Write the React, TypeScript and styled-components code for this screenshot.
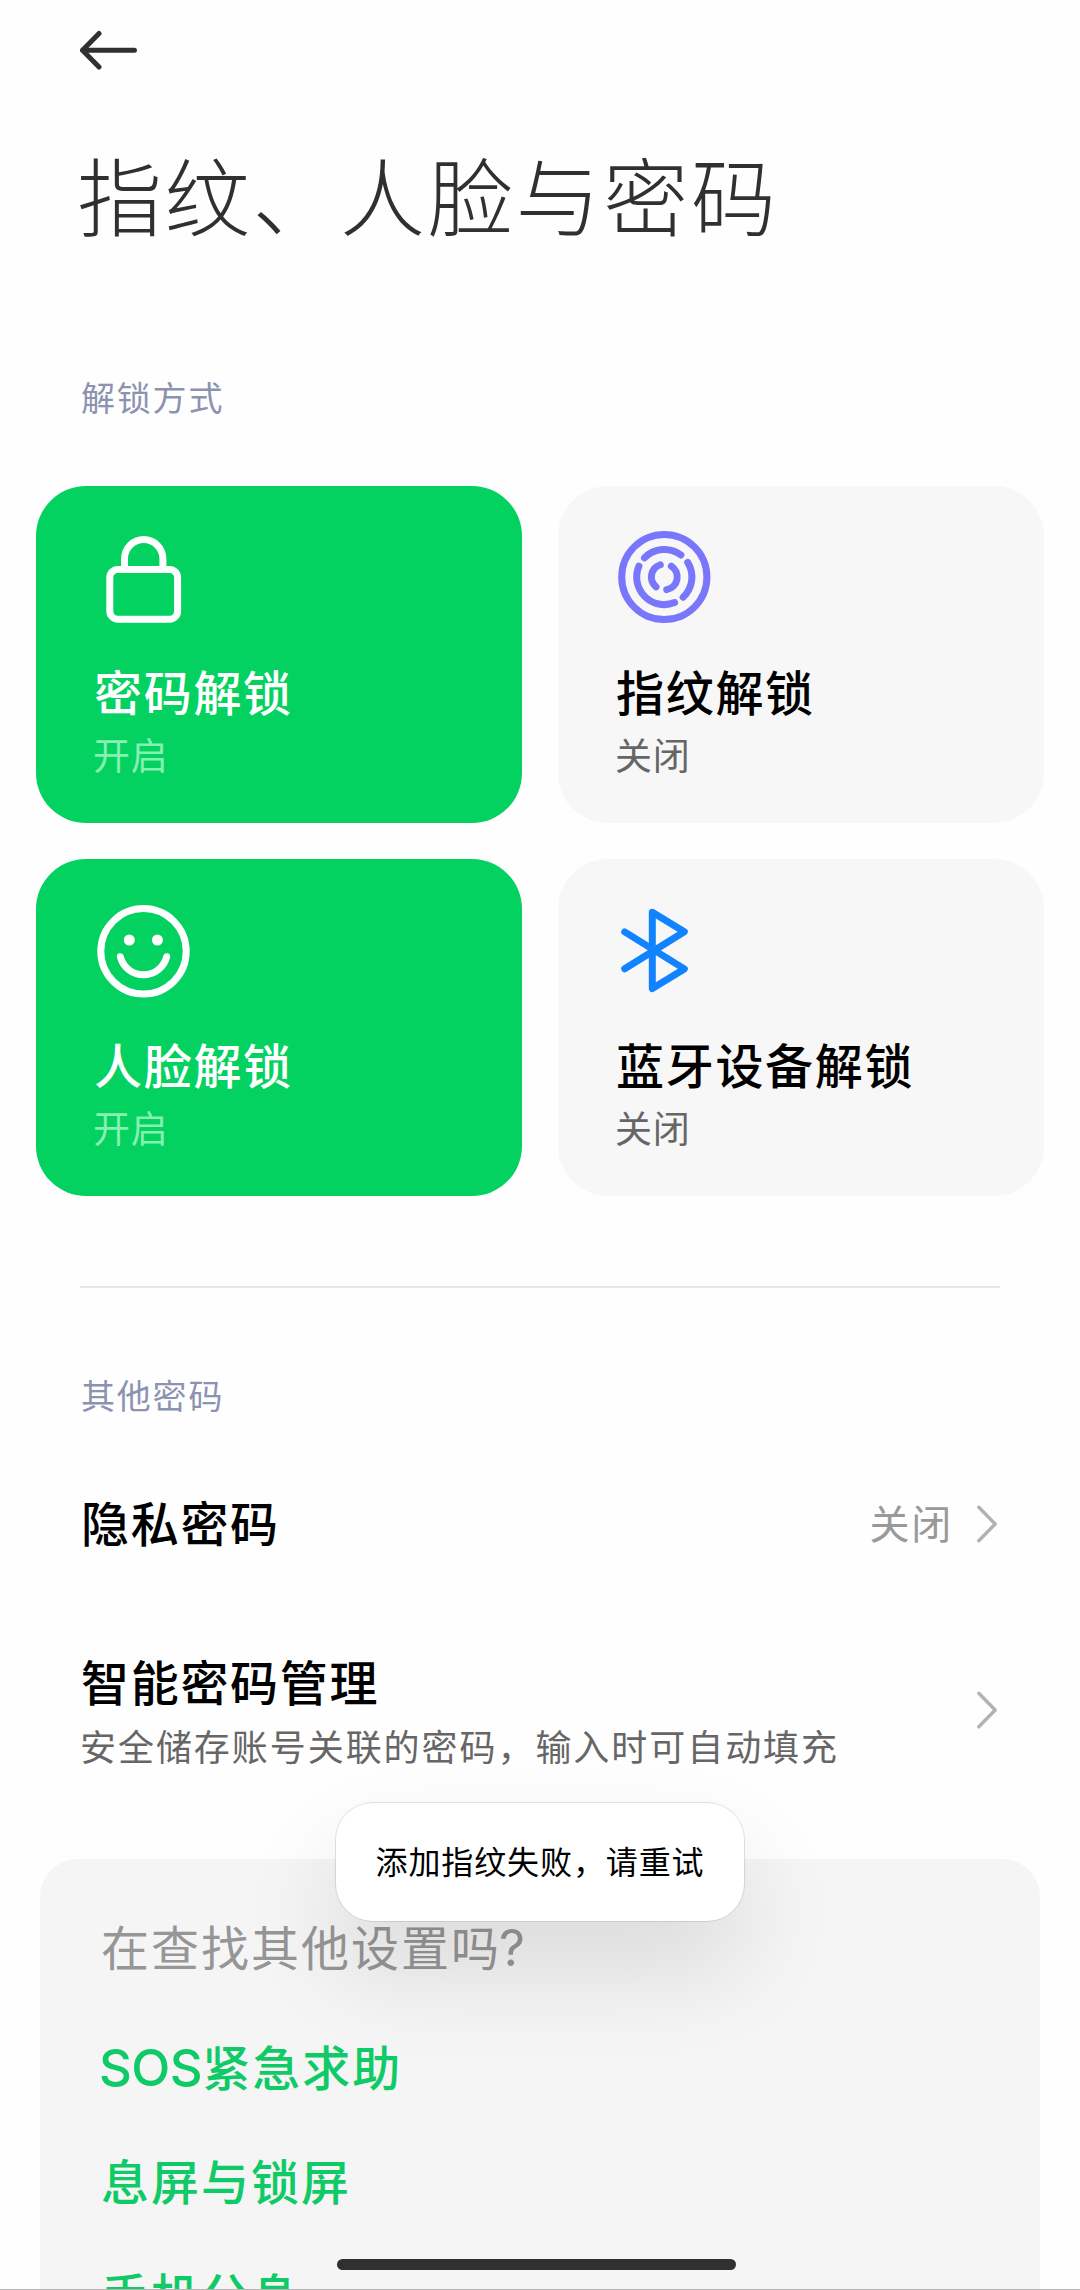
import React from "react";
import styled, { createGlobalStyle } from "styled-components";

const GlobalStyle = createGlobalStyle`
  *, *::before, *::after { box-sizing: border-box; }
  html, body { margin: 0; padding: 0; background: #fefefe; }
  body {
    font-family: "Noto Sans CJK SC", "Noto Sans", sans-serif;
    -webkit-font-smoothing: antialiased;
  }
`;

const Screen = styled.div`
  position: relative;
  width: 1080px;
  height: 2290px;
  overflow: hidden;
  display: flex;
  flex-direction: column;
  background: #fefefe;
  border-bottom: 1px solid #b4b4b4;
`;

const Header = styled.header`
  flex: none;
  display: flex;
  flex-direction: column;
  align-items: flex-start;
  padding: 30px 78px 0;
`;

const BackButton = styled.button`
  display: block;
  padding: 0;
  border: 0;
  background: none;
  line-height: 0;
`;

const PageTitle = styled.h1`
  margin: 73px 0 0 -1px;
  font-size: 85px;
  font-weight: 300;
  line-height: 100px;
  letter-spacing: 2.7px;
  color: #303030;
  white-space: nowrap;
`;

const SectionLabel = styled.h2<{ $top: number }>`
  flex: none;
  margin: ${(p) => p.$top}px 0 0 81px;
  font-size: 34px;
  font-weight: 400;
  line-height: 48px;
  letter-spacing: 1.8px;
  color: #8c93b0;
`;

const CardGrid = styled.section`
  flex: none;
  display: grid;
  grid-template-columns: 486px 486px;
  grid-auto-rows: 337px;
  gap: 36px;
  margin: 65px 36px 0;
`;

const Card = styled.article<{ $active: boolean }>`
  display: flex;
  flex-direction: column;
  align-items: flex-start;
  padding: 40px 58px 0;
  border-radius: 50px;
  background: ${(p) => (p.$active ? "#03d160" : "#f7f7f7")};
  color: ${(p) => (p.$active ? "#ffffff" : "#000000")};
`;

const CardIcon = styled.svg`
  flex: none;
  display: block;
  width: 100px;
  height: 100px;
  fill: none;
  stroke-width: 7px;
  stroke-linecap: round;
  stroke-linejoin: round;
`;

const CardTitle = styled.div`
  margin-top: 34px;
  font-size: 48px;
  font-weight: 500;
  line-height: 60px;
  letter-spacing: 1.7px;
  white-space: nowrap;
`;

const CardStatus = styled.div<{ $active: boolean }>`
  margin: 10px 0 0 -1px;
  font-size: 37px;
  line-height: 48px;
  letter-spacing: 0.7px;
  color: ${(p) => (p.$active ? "#85f0b2" : "#666666")};
`;

const Divider = styled.hr`
  flex: none;
  width: 920px;
  height: 2px;
  margin: 90px 0 0 80px;
  border: 0;
  background: #e6e6e6;
`;

const List = styled.section`
  flex: none;
  margin-top: 39px;
`;

const Row = styled.div<{ $height: number }>`
  display: flex;
  align-items: center;
  height: ${(p) => p.$height}px;
  padding: 0 82px 0 80px;
`;

const RowText = styled.div<{ $lift?: number }>`
  flex: 1;
  min-width: 0;
  padding-bottom: ${(p) => p.$lift ?? 0}px;
`;

const RowTitle = styled.div`
  padding-left: 1px;
  font-size: 48px;
  font-weight: 500;
  line-height: 60px;
  letter-spacing: 1.7px;
  color: #000;
`;

const RowNote = styled.div`
  margin-top: 10px;
  font-size: 36px;
  line-height: 50px;
  letter-spacing: 1.95px;
  color: #666;
  white-space: nowrap;
`;

const RowValue = styled.div`
  margin-right: 23px;
  padding-bottom: 5px;
  font-size: 40px;
  line-height: 56px;
  letter-spacing: 1.7px;
  color: #999;
`;

const Chevron = styled.svg`
  flex: none;
  display: block;
  width: 22px;
  height: 40px;
  fill: none;
  stroke: #b2b2b2;
  stroke-width: 3.4px;
  stroke-linecap: round;
  stroke-linejoin: round;
`;

const Suggestions = styled.section`
  flex: none;
  display: flex;
  flex-direction: column;
  gap: 54px;
  height: 500px;
  margin: 29px 40px 0;
  padding: 56px 61px 0;
  border-radius: 38px 38px 0 0;
  background: #f5f5f5;
`;

const Question = styled.div`
  margin-bottom: 6px;
  font-size: 48px;
  line-height: 60px;
  letter-spacing: 2px;
  color: #969696;
`;

const SuggestionLink = styled.a`
  flex: none;
  font-size: 48px;
  font-weight: 500;
  line-height: 60px;
  letter-spacing: 2px;
  color: #0fca66;
`;

const Latin = styled.span`
  margin-left: -2px;
  font-family: "Inter", sans-serif;
  font-size: 1.06em;
  line-height: 1;
  letter-spacing: -0.5px;
`;

const Toast = styled.div`
  position: absolute;
  left: 335px;
  top: 1802px;
  display: flex;
  align-items: center;
  justify-content: center;
  width: 410px;
  height: 120px;
  padding-bottom: 4px;
  border: 1px solid rgba(0, 0, 0, 0.1);
  border-radius: 38px;
  background: #fff;
  background-clip: padding-box;
  box-shadow: 0 48px 100px rgba(0, 0, 0, 0.11);
  font-size: 32px;
  line-height: 44px;
  letter-spacing: 0.9px;
  color: #000;
  white-space: nowrap;
`;

const HomeIndicator = styled.div`
  position: absolute;
  left: 337px;
  top: 2259px;
  width: 399px;
  height: 11px;
  border-radius: 6px;
  background: #303030;
`;

const LockIcon = () => (
  <CardIcon viewBox="0 0 100 100" stroke="#fff">
    <rect x="15.8" y="43.5" width="67.8" height="49.7" rx="8" />
    <path d="M30.5 43V32.8a19.2 19.2 0 0 1 38.4 0V43" strokeLinecap="butt" />
  </CardIcon>
);

const FingerprintIcon = () => {
  const arc = (r: number, from: number, to: number) => {
    const at = (deg: number) => {
      const a = (deg * Math.PI) / 180;
      return `${(48.3 + r * Math.cos(a)).toFixed(2)} ${(51 + r * Math.sin(a)).toFixed(2)}`;
    };
    return `M${at(from)}A${r} ${r} 0 0 1 ${at(to)}`;
  };
  return (
    <CardIcon viewBox="0 0 100 100" stroke="#7876fa">
      <circle cx="48.3" cy="51" r="42.6" />
      <path d={arc(27.6, -136, -53)} />
      <path d={arc(27.6, -32, 47)} />
      <path d={arc(27.6, 68, 203)} />
      <path d={arc(12.9, 130, 252)} />
      <path d={arc(12.9, -57, 79)} />
    </CardIcon>
  );
};

const FaceIcon = () => (
  <CardIcon viewBox="0 0 100 100" stroke="#fff">
    <circle cx="49.5" cy="52.3" r="42.7" />
    <circle cx="35.3" cy="41" r="5.5" fill="#fff" stroke="none" />
    <circle cx="63.4" cy="41" r="5.5" fill="#fff" stroke="none" />
    <path d="M26.3 57.7a23.9 23.9 0 0 0 46.4 0" />
  </CardIcon>
);

const BluetoothIcon = () => (
  <CardIcon viewBox="0 0 100 100" stroke="#1283ff">
    <path d="M8.7 32.9 68.3 69.9 36.3 89.6V13.2L68.3 32.7 8.7 69.7" />
  </CardIcon>
);

const methods = [
  { title: "密码解锁", active: true, Icon: LockIcon },
  { title: "指纹解锁", active: false, Icon: FingerprintIcon },
  { title: "人脸解锁", active: true, Icon: FaceIcon },
  { title: "蓝牙设备解锁", active: false, Icon: BluetoothIcon },
];

const ChevronRight = () => (
  <Chevron viewBox="0 0 22 40">
    <path d="M2.8 3.2 19.2 20 2.8 36.8" />
  </Chevron>
);

export default function App() {
  return (
    <>
      <GlobalStyle />
      <Screen lang="zh-CN">
        <Header>
          <BackButton aria-label="返回">
            <svg width="62" height="40" viewBox="0 0 62 40" fill="none" stroke="#303030" strokeWidth="5" strokeLinecap="round" strokeLinejoin="round">
              <path d="M21 3.5 4.5 20.3 21 37M4.5 20.3H56.5" />
            </svg>
          </BackButton>
          <PageTitle>指纹、人脸与密码</PageTitle>
        </Header>

        <SectionLabel $top={130}>解锁方式</SectionLabel>
        <CardGrid>
          {methods.map(({ title, active, Icon }) => (
            <Card key={title} $active={active}>
              <Icon />
              <CardTitle>{title}</CardTitle>
              <CardStatus $active={active}>{active ? "开启" : "关闭"}</CardStatus>
            </Card>
          ))}
        </CardGrid>

        <Divider />

        <SectionLabel $top={83}>其他密码</SectionLabel>
        <List>
          <Row $height={132}>
            <RowText $lift={6}>
              <RowTitle>隐私密码</RowTitle>
            </RowText>
            <RowValue>关闭</RowValue>
            <ChevronRight />
          </Row>
          <Row $height={240}>
            <RowText>
              <RowTitle>智能密码管理</RowTitle>
              <RowNote>安全储存账号关联的密码，输入时可自动填充</RowNote>
            </RowText>
            <ChevronRight />
          </Row>
        </List>

        <Suggestions>
          <Question>
            在查找其他设置吗<Latin>?</Latin>
          </Question>
          <SuggestionLink>
            <Latin>SOS</Latin>紧急求助
          </SuggestionLink>
          <SuggestionLink>息屏与锁屏</SuggestionLink>
          <SuggestionLink>手机分身</SuggestionLink>
        </Suggestions>

        <Toast>添加指纹失败，请重试</Toast>
        <HomeIndicator />
      </Screen>
    </>
  );
}
